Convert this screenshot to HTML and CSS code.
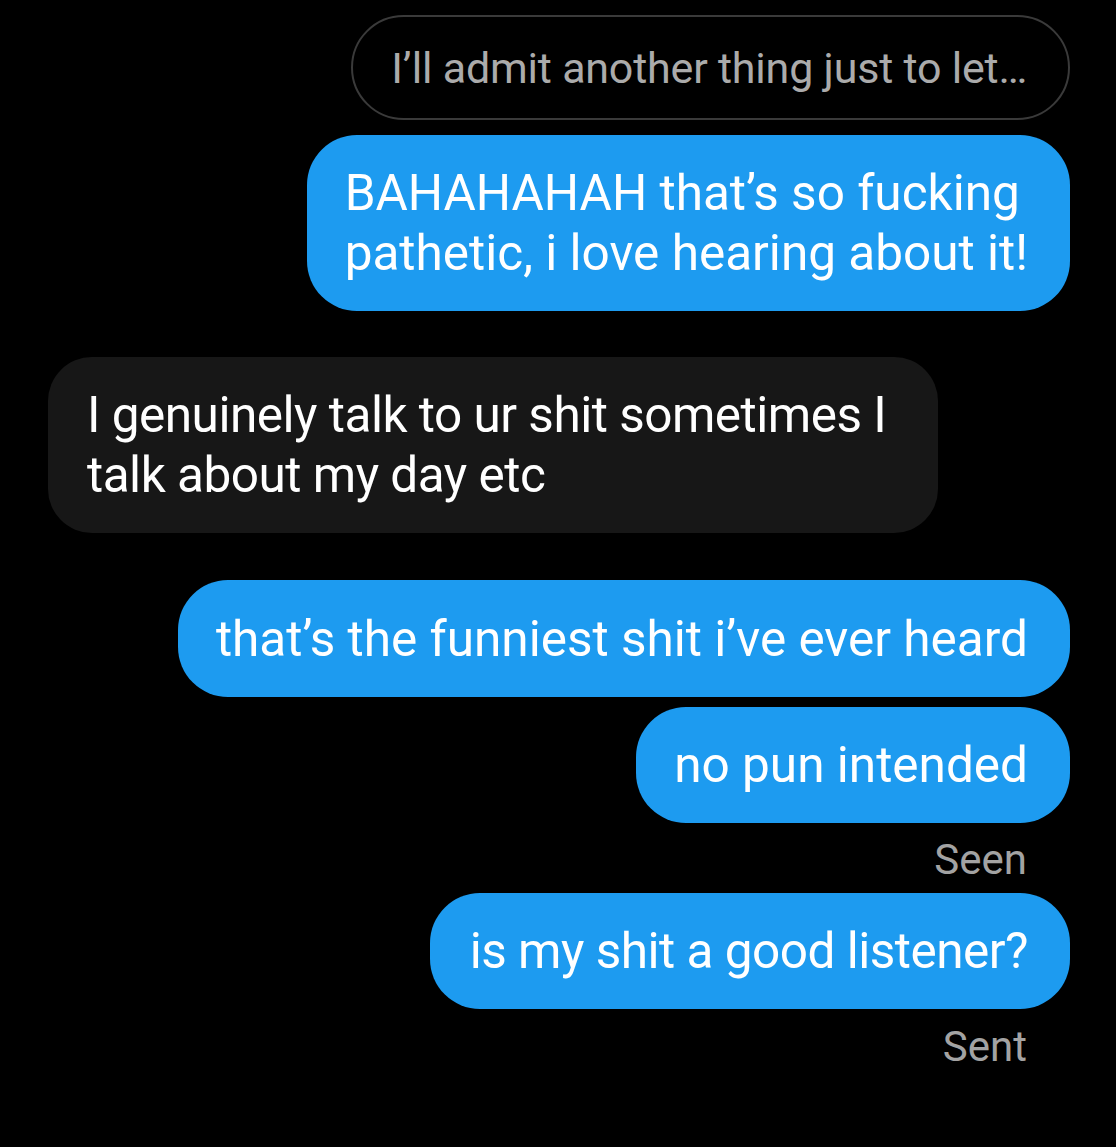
FILE: index.html
```html
<!DOCTYPE html>
<html>
<head>
<meta charset="utf-8">
<link rel="stylesheet" href="styles.css">
</head>
<body>
<div class="chat">
  <div class="reply">I’ll admit another thing just to let…</div>
  <div class="bubble out b1">BAHAHAHAH that’s so fucking<br>pathetic, i love hearing about it!</div>
  <div class="bubble in">I genuinely talk to ur shit sometimes I<br>talk about my day etc</div>
  <div class="bubble out b3">that’s the funniest shit i’ve ever heard</div>
  <div class="bubble out b4">no pun intended</div>
  <div class="status seen">Seen</div>
  <div class="bubble out b5">is my shit a good listener?</div>
  <div class="status sent">Sent</div>
</div>
</body>
</html>
```
FILE: styles.css
```css
html, body {
  margin: 0;
  padding: 0;
  background: #000;
}
body {
  width: 1116px;
  height: 1147px;
  overflow: hidden;
  font-family: Roboto, "Liberation Sans", sans-serif;
}
.chat {
  display: flex;
  flex-direction: column;
  align-items: flex-end;
  padding: 15px 46px 0 48px;
}
.reply {
  box-sizing: border-box;
  height: 105px;
  border: 2px solid #3a3a3a;
  border-radius: 53px;
  padding: 0 41px 0 38px;
  display: flex;
  align-items: center;
  color: #ababab;
  font-size: 43px;
  letter-spacing: -0.2px;
  white-space: nowrap;
}
.bubble {
  box-sizing: border-box;
  padding: 28px 42px 28px 38px;
  border-radius: 50px;
  font-size: 49.5px;
  line-height: 60px;
  color: #fff;
  letter-spacing: 0;
  white-space: nowrap;
}
.out {
  background: #1d9bf0;
}
.in {
  align-self: flex-start;
  background: #171717;
  border-radius: 44px;
  width: 890px;
  padding-left: 39px;
  letter-spacing: -0.5px;
}
.b1 { margin-top: 15px; }
.in { margin-top: 46px; }
.b3 { margin-top: 47px; padding-top: 29px; }
.b4 { margin-top: 10px; }
.b5 { margin-top: 0; padding-left: 40px; letter-spacing: -0.5px; }
.status {
  color: #a3a3a3;
  font-size: 42px;
  line-height: 50px;
  margin-right: 43px;
}
.seen { margin-top: 12px; margin-bottom: 8px; }
.sent { margin-top: 13px; }
```
